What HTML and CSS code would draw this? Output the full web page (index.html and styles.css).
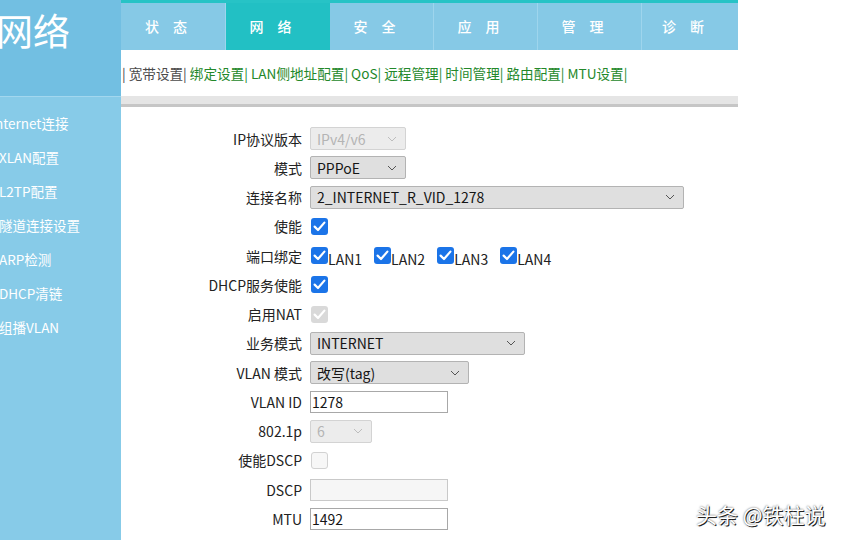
FILE: index.html
```html
<!DOCTYPE html>
<html lang="zh-CN">
<head>
<meta charset="utf-8">
<title>网络</title>
<link rel="stylesheet" href="styles.css">
</head>
<body>
<div class="app">
  <aside class="left">
    <div class="brand">网络</div>
    <ul class="side">
      <li class="side-item first">Internet连接</li>
      <li class="side-item">XLAN配置</li>
      <li class="side-item">L2TP配置</li>
      <li class="side-item">隧道连接设置</li>
      <li class="side-item">ARP检测</li>
      <li class="side-item">DHCP清链</li>
      <li class="side-item">组播VLAN</li>
    </ul>
  </aside>
  <main class="main">
    <nav class="tabs">
      <a class="tab">状态</a>
      <a class="tab active">网络</a>
      <a class="tab">安全</a>
      <a class="tab">应用</a>
      <a class="tab">管理</a>
      <a class="tab last">诊断</a>
    </nav>
    <div class="submenu"><span class="cur">| 宽带设置|</span> <a>绑定设置|</a> <a>LAN侧地址配置|</a> <a>QoS|</a> <a>远程管理|</a> <a>时间管理|</a> <a>路由配置|</a> <a>MTU设置|</a></div>
    <div class="divider"></div>
    <div class="form">
      <div class="label">IP协议版本</div>
      <div class="ctl"><div class="select disabled w96"><span>IPv4/v6</span><svg class="chev" width="10" height="6" viewBox="0 0 10 6"><polyline points="1,1 5,5 9,1"/></svg></div></div>

      <div class="label">模式</div>
      <div class="ctl"><div class="select w96"><span>PPPoE</span><svg class="chev" width="10" height="6" viewBox="0 0 10 6"><polyline points="1,1 5,5 9,1"/></svg></div></div>

      <div class="label">连接名称</div>
      <div class="ctl"><div class="select w374"><span>2_INTERNET_R_VID_1278</span><svg class="chev" width="10" height="6" viewBox="0 0 10 6"><polyline points="1,1 5,5 9,1"/></svg></div></div>

      <div class="label">使能</div>
      <div class="ctl"><span class="cb"><svg width="17" height="17" viewBox="0 0 17 17"><polyline points="3.6,8.6 7,12 13.4,4.6"/></svg></span></div>

      <div class="label">端口绑定</div>
      <div class="ctl ports">
        <span class="port"><span class="cb"><svg width="17" height="17" viewBox="0 0 17 17"><polyline points="3.6,8.6 7,12 13.4,4.6"/></svg></span><span class="port-name">LAN1</span></span>
        <span class="port"><span class="cb"><svg width="17" height="17" viewBox="0 0 17 17"><polyline points="3.6,8.6 7,12 13.4,4.6"/></svg></span><span class="port-name">LAN2</span></span>
        <span class="port"><span class="cb"><svg width="17" height="17" viewBox="0 0 17 17"><polyline points="3.6,8.6 7,12 13.4,4.6"/></svg></span><span class="port-name">LAN3</span></span>
        <span class="port"><span class="cb"><svg width="17" height="17" viewBox="0 0 17 17"><polyline points="3.6,8.6 7,12 13.4,4.6"/></svg></span><span class="port-name">LAN4</span></span>
      </div>

      <div class="label">DHCP服务使能</div>
      <div class="ctl"><span class="cb"><svg width="17" height="17" viewBox="0 0 17 17"><polyline points="3.6,8.6 7,12 13.4,4.6"/></svg></span></div>

      <div class="label">启用NAT</div>
      <div class="ctl"><span class="cb cb-disabled"><svg width="17" height="17" viewBox="0 0 17 17"><polyline points="3.6,8.6 7,12 13.4,4.6"/></svg></span></div>

      <div class="label">业务模式</div>
      <div class="ctl"><div class="select w215"><span>INTERNET</span><svg class="chev" width="10" height="6" viewBox="0 0 10 6"><polyline points="1,1 5,5 9,1"/></svg></div></div>

      <div class="label">VLAN 模式</div>
      <div class="ctl"><div class="select w159"><span>改写(tag)</span><svg class="chev" width="10" height="6" viewBox="0 0 10 6"><polyline points="1,1 5,5 9,1"/></svg></div></div>

      <div class="label">VLAN ID</div>
      <div class="ctl"><div class="input w138">1278</div></div>

      <div class="label">802.1p</div>
      <div class="ctl"><div class="select disabled w62"><span>6</span><svg class="chev" width="10" height="6" viewBox="0 0 10 6"><polyline points="1,1 5,5 9,1"/></svg></div></div>

      <div class="label">使能DSCP</div>
      <div class="ctl"><span class="cb cb-off"></span></div>

      <div class="label">DSCP</div>
      <div class="ctl"><div class="input input-disabled w138"></div></div>

      <div class="label">MTU</div>
      <div class="ctl"><div class="input w138">1492</div></div>
    </div>
  </main>
</div>
<div class="watermark">头条 @铁柱说</div>
</body>
</html>
```

FILE: styles.css
```css
* { box-sizing: border-box; }

body {
  margin: 0;
  width: 846px;
  height: 540px;
  overflow: hidden;
  position: relative;
  background: #fff;
  font-family: "Noto Sans CJK SC", "Noto Sans", sans-serif;
  color: #222;
}

.app {
  display: flex;
  height: 540px;
}

/* left column */
.left {
  width: 121px;
  flex: none;
  background: #87cbe8;
  overflow: hidden;
}

.brand {
  height: 97px;
  background: #72bfe2;
  border-bottom: 1px solid #a3d7ee;
  color: #fff;
  font-size: 37px;
  line-height: 40px;
  padding-top: 10px;
  text-indent: -4px;
  white-space: nowrap;
}

.side {
  list-style: none;
  margin: 0;
  padding: 9px 0 0;
}

.side-item {
  height: 34px;
  line-height: 34px;
  font-size: 13.5px;
  color: #fff;
  white-space: nowrap;
  text-indent: -1px;
}

.side-item.first {
  text-indent: -9px;
}

/* main */
.main {
  width: 617px;
  flex: none;
}

.tabs {
  display: grid;
  grid-template-columns: 105px 104px 104px 104px 104px 96px;
  height: 50px;
  border-top: 3px solid #27c3c6;
  background: #86c9e6;
}

.tab {
  display: flex;
  align-items: center;
  justify-content: center;
  color: #fff;
  font-size: 14px;
  font-weight: 500;
  letter-spacing: 14px;
  border-right: 1px solid #9ed5ed;
  padding-bottom: 1px;
}

.tab.active {
  background: #22c0c4;
  border-right-color: #22c0c4;
}

.tab.last {
  border-right: none;
}

.submenu {
  height: 46px;
  line-height: 46px;
  font-size: 13.6px;
  letter-spacing: 0;
  padding-left: 1px;
  white-space: nowrap;
  color: #23882a;
}

.submenu .cur {
  color: #4b4b4b;
}

.submenu a {
  color: #23882a;
}

.divider {
  height: 11px;
  background: #e5e5e5;
  border-bottom: 3px solid #c6c6c6;
}

/* form */
.form {
  display: grid;
  grid-template-columns: 181px auto;
  column-gap: 8px;
  grid-auto-rows: 29.25px;
  align-items: center;
  padding-top: 17px;
}

.label {
  text-align: right;
  font-size: 14px;
  color: #222;
  white-space: nowrap;
}

.ctl {
  display: flex;
  align-items: center;
}

.select {
  display: flex;
  align-items: center;
  justify-content: space-between;
  height: 23px;
  border: 1px solid #b3b3b3;
  border-radius: 2px;
  background: #dfdfdf;
  padding: 0 8px 0 6px;
  font-size: 14px;
  color: #151515;
}

.select .chev {
  fill: none;
  stroke: #555;
  stroke-width: 1;
}

.select.disabled {
  background: #ececec;
  border-color: #d3d3d3;
  color: #b4b4b4;
}

.select.disabled .chev {
  stroke: #bdbdbd;
}

.input {
  height: 22px;
  line-height: 20px;
  border: 1px solid #a8a8a8;
  background: #fff;
  padding-left: 1px;
  font-size: 14px;
  color: #151515;
}

.input-disabled {
  background: #f6f6f6;
  border-color: #c9c9c9;
}

.w62 { width: 62px; }
.w96 { width: 96px; }
.w138 { width: 138px; }
.w159 { width: 159px; }
.w215 { width: 215px; }
.w374 { width: 374px; }

.cb {
  width: 17px;
  height: 17px;
  margin-left: 1px;
  border-radius: 3px;
  background: #1b74e8;
  display: inline-flex;
  flex: none;
}

.cb svg polyline {
  fill: none;
  stroke: #fff;
  stroke-width: 2.2;
  stroke-linecap: round;
  stroke-linejoin: round;
}

.cb-disabled {
  background: #d9d9d9;
}

.cb-off {
  background: #f7f7f7;
  border: 1px solid #d2d2d2;
}

.ports {
  gap: 11px;
}

.port {
  display: flex;
  align-items: flex-end;
}

.port-name {
  font-size: 14px;
  line-height: 14px;
  margin-bottom: -2px;
  color: #222;
}

.watermark {
  position: absolute;
  left: 696px;
  top: 499px;
  font-size: 21px;
  color: #fff;
  white-space: nowrap;
  text-shadow: 1px 1px 0 #222, 0 0 2px rgba(0, 0, 0, 0.7);
}
```
